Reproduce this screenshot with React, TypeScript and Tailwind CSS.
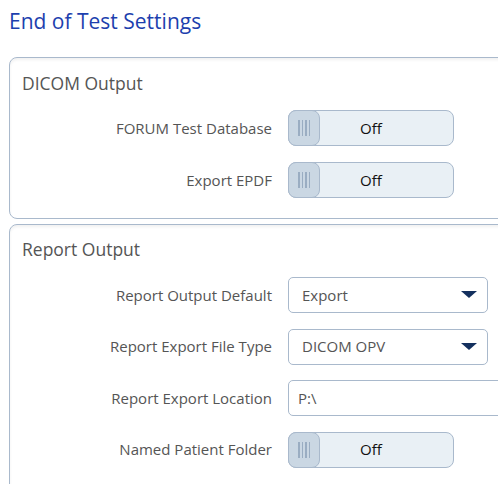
import React from "react";

const font = { fontFamily: '"Open Sans", "Noto Sans", sans-serif' };

function Toggle() {
  return (
    <div className="relative w-[166px] h-[36px] rounded-[8px] border border-[#a9b9cc] bg-[#e9f0f5] flex items-center justify-center">
      <div className="absolute left-[-1px] top-[-1px] w-[32px] h-[36px] rounded-[8px] border border-[#a9b9cc] bg-[#cad7e3] flex items-center justify-center gap-[2px]">
        <span className="w-[1.5px] h-[16px] bg-[#9aadc2]" />
        <span className="w-[1.5px] h-[16px] bg-[#9aadc2]" />
        <span className="w-[1.5px] h-[16px] bg-[#9aadc2]" />
        <span className="w-[1.5px] h-[16px] bg-[#9aadc2]" />
      </div>
      <span className="text-[15px] text-[#111]">Off</span>
    </div>
  );
}

function Select({ value }: { value: string }) {
  return (
    <div className="w-[200px] h-[36px] rounded-[5px] border border-[#a9b9cc] bg-white flex items-center justify-between pl-[13px] pr-[10px]">
      <span className="text-[15px] text-[#555]">{value}</span>
      <svg width="16" height="8" viewBox="0 0 16 8">
        <polygon points="0,0 16,0 8,7" fill="#14305e" />
      </svg>
    </div>
  );
}

function Row({ label, children }: { label: string; children: React.ReactNode }) {
  return (
    <div className="flex items-center h-[36px]">
      <div className="w-[278px] pr-[16px] text-right text-[15px] text-[#555] whitespace-nowrap">{label}</div>
      {children}
    </div>
  );
}

export default function App() {
  return (
    <div className="w-[498px] h-[484px] overflow-hidden bg-white" style={font}>
      <div className="pl-[9px] pt-[8px] h-[57px] text-[21px] leading-[27px] text-[#1d3fae]">End of Test Settings</div>
      <div className="ml-[9px] w-[520px] rounded-l-[8px] border border-[#a9b9cc] shadow-[inset_0_2px_3px_rgba(0,0,0,0.06)] pt-[14px] pb-[20px]">
        <div className="pl-[12px] h-[22px] leading-[22px] text-[17.5px] text-[#555]">DICOM Output</div>
        <div className="mt-[16px] flex flex-col gap-[16px]">
          <Row label="FORUM Test Database"><Toggle /></Row>
          <Row label="Export EPDF"><Toggle /></Row>
        </div>
      </div>
      <div className="ml-[9px] mt-[5px] w-[520px] h-[300px] rounded-l-[8px] border border-[#a9b9cc] shadow-[inset_0_2px_3px_rgba(0,0,0,0.06)] pt-[13px]">
        <div className="pl-[12px] h-[22px] leading-[22px] text-[17.5px] text-[#555]">Report Output</div>
        <div className="mt-[17px] flex flex-col gap-[15.5px]">
          <Row label="Report Output Default"><Select value="Export" /></Row>
          <Row label="Report Export File Type"><Select value="DICOM OPV" /></Row>
          <Row label="Report Export Location">
            <div className="w-[240px] h-[36px] rounded-[5px] border border-[#a9b9cc] bg-white flex items-center pl-[9px] text-[15px] text-[#555]">P:\</div>
          </Row>
          <Row label="Named Patient Folder"><Toggle /></Row>
        </div>
      </div>
    </div>
  );
}
